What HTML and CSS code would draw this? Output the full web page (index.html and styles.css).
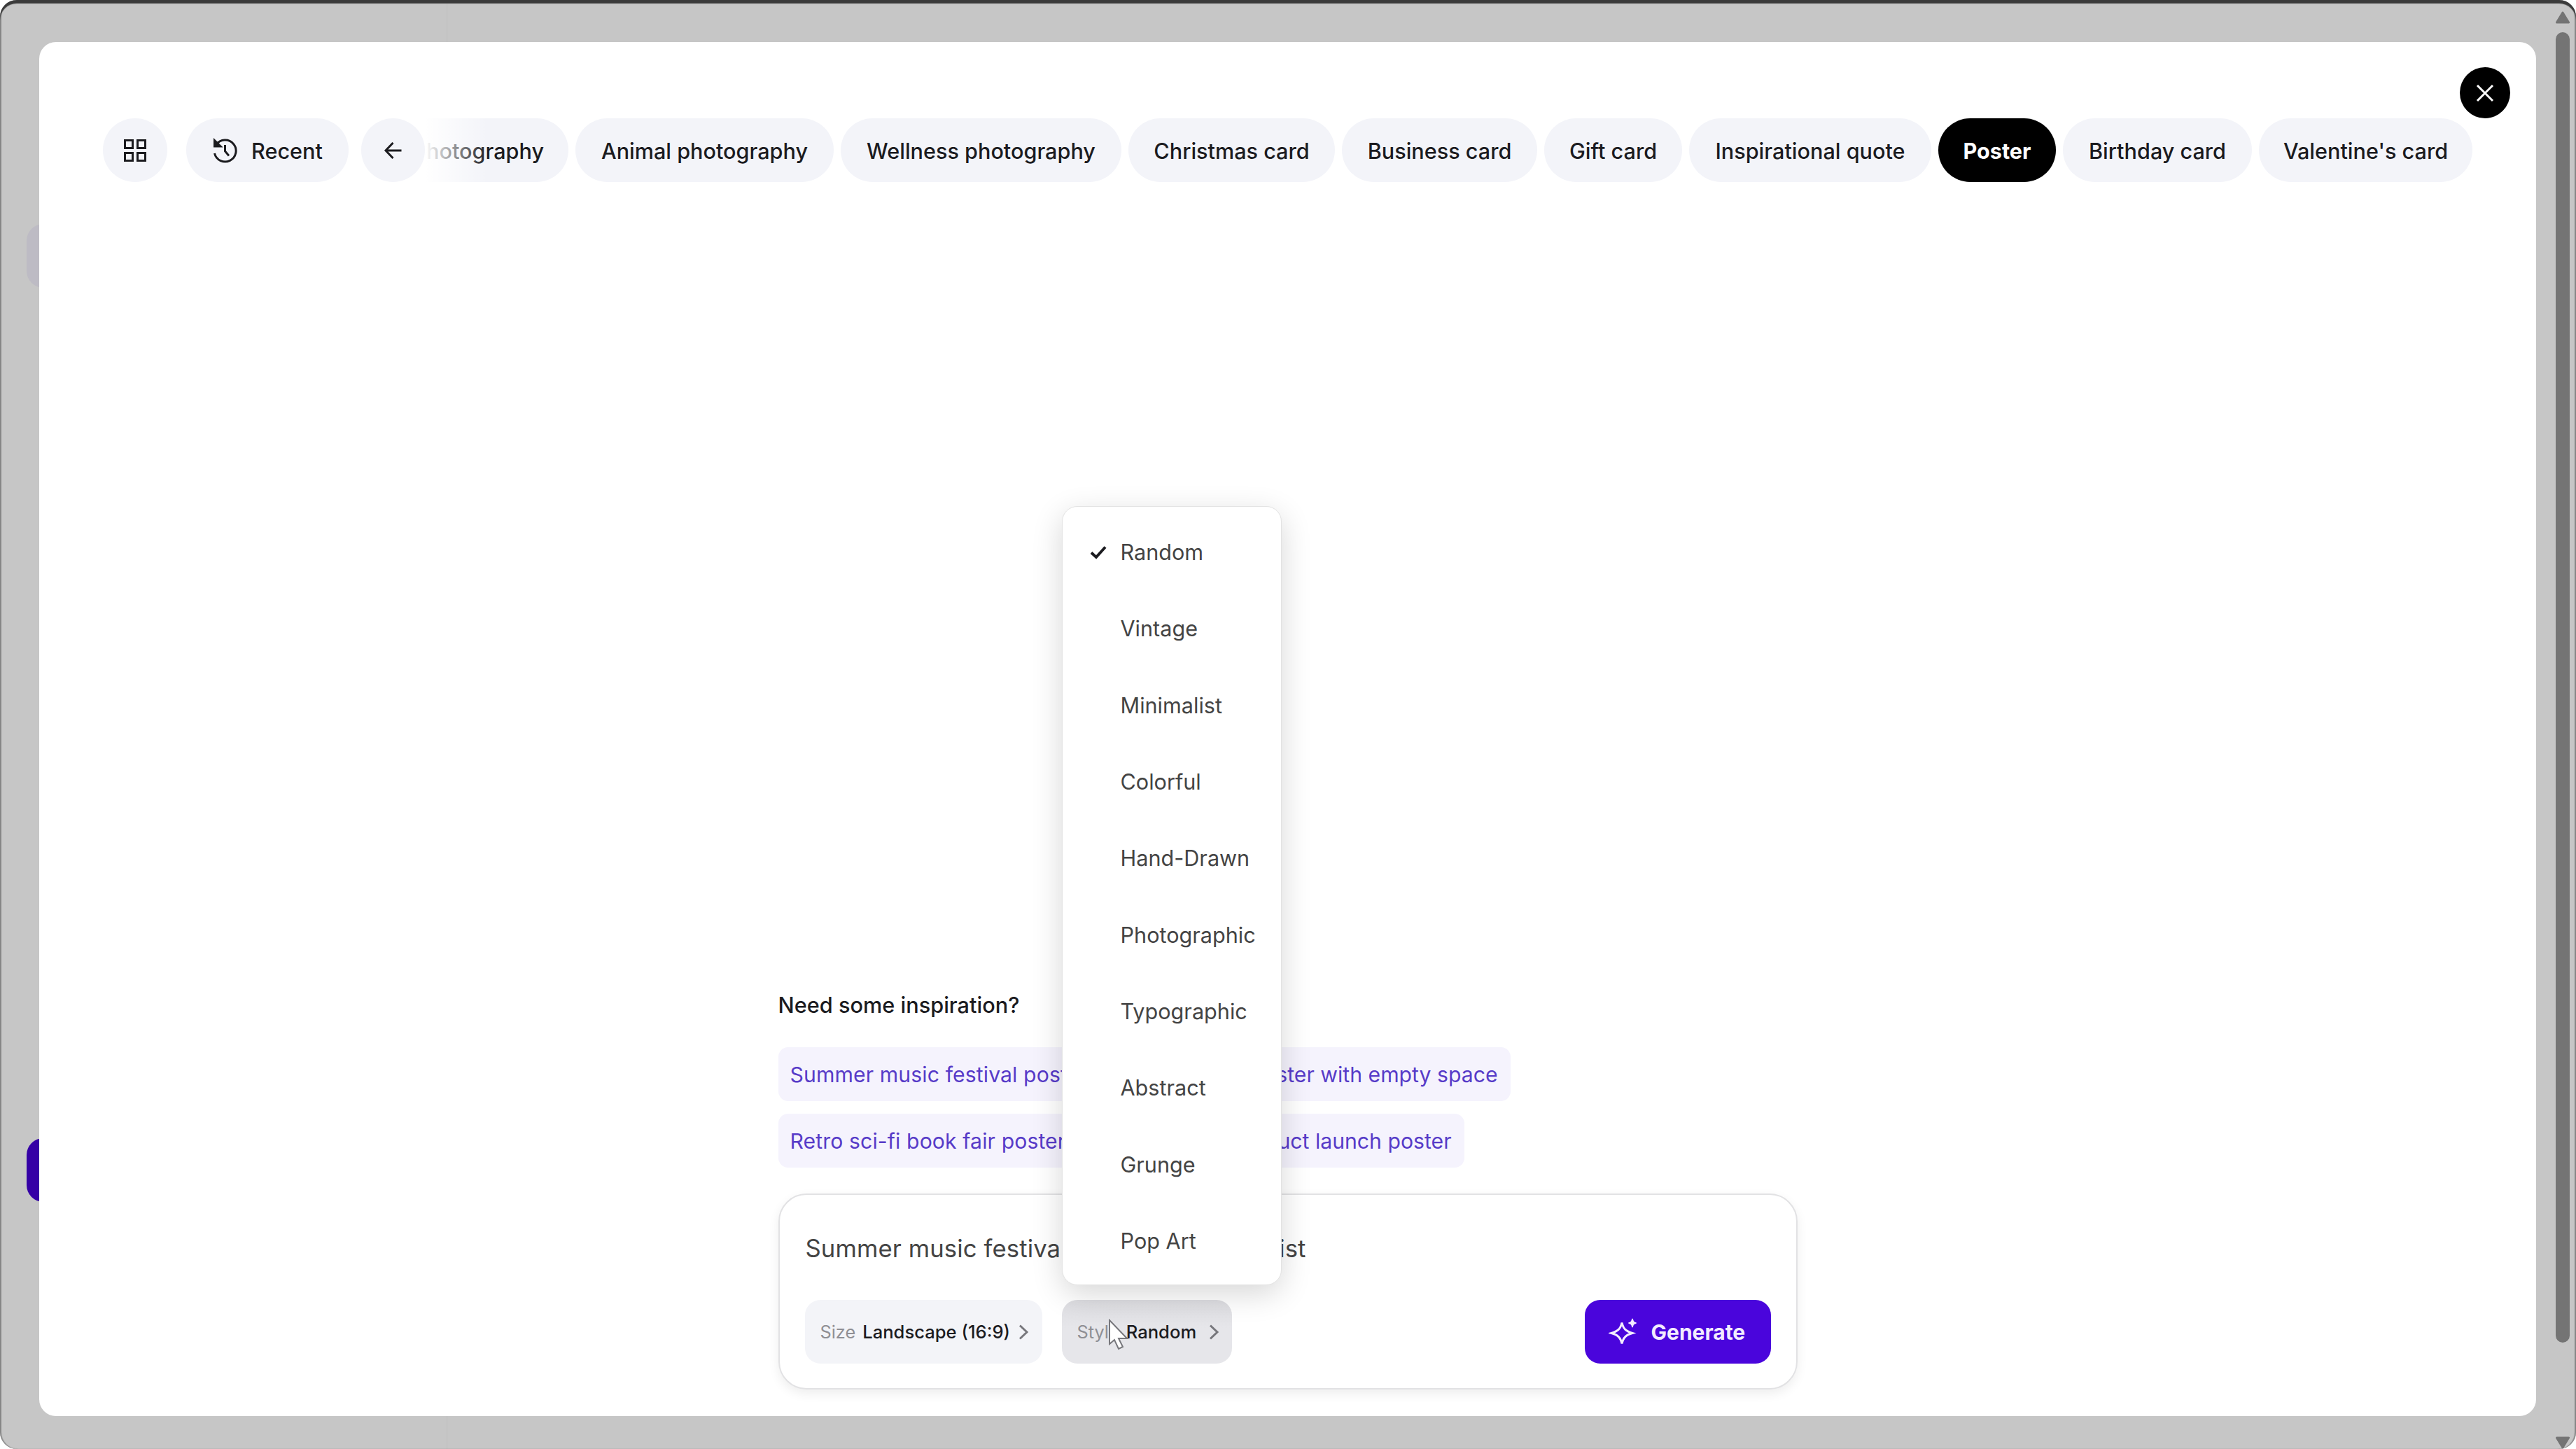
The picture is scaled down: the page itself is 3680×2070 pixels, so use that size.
FILE: index.html
```
<!DOCTYPE html>
<html lang="en">
<head>
  <meta charset="UTF-8" />
  <meta name="viewport" content="width=device-width, initial-scale=1" />
  <title>Generate image</title>
  <link rel="stylesheet" href="styles.css">
</head>
<body>
  <div class="window">
    <div class="behind behind-item"></div>
    <div class="behind behind-button"></div>

    <main class="modal">
      <button class="close" aria-label="Close">
        <svg width="26" height="26" viewBox="0 0 26 26"><path d="M2 2 24 24M24 2 2 24" /></svg>
      </button>

      <nav class="tabs">
        <button class="chip round" aria-label="All">
          <svg width="34" height="34" viewBox="0 0 34 34">
            <rect x="2.5" y="2.5" width="11" height="11" />
            <rect x="20.5" y="2.5" width="11" height="11" />
            <rect x="2.5" y="20.5" width="11" height="11" />
            <rect x="20.5" y="20.5" width="11" height="11" />
          </svg>
        </button>
        <button class="chip recent">
          <svg width="38" height="38" viewBox="0 0 38 38">
            <path d="M6 10.500A15.500 15.500 0 1 1 3.500 23M18.500 11v9l5.500 6.500" />
            <path class="solid" d="M3.500 4.500v8.500h8.500z" />
          </svg>
          Recent
        </button>
        <button class="chip round back" aria-label="Back">
          <svg width="28" height="28" viewBox="0 0 28 28"><path d="M25.500 14H3M13.500 3 3 14l10.500 11" /></svg>
        </button>
        <div class="scroller">
          <button class="chip cut">Food photography</button>
          <button class="chip">Animal photography</button>
          <button class="chip">Wellness photography</button>
          <button class="chip">Christmas card</button>
          <button class="chip">Business card</button>
          <button class="chip">Gift card</button>
          <button class="chip">Inspirational quote</button>
          <button class="chip active">Poster</button>
          <button class="chip">Birthday card</button>
          <button class="chip">Valentine's card</button>
        </div>
      </nav>

      <section class="composer">
        <h2>Need some inspiration?</h2>
        <div class="ideas">
          <div class="idea-row">
            <button class="idea">Summer music festival poster</button>
            <button class="idea idea-wide">Minimal poster with empty space</button>
          </div>
          <div class="idea-row">
            <button class="idea">Retro sci-fi book fair poster</button>
            <button class="idea idea-narrow">Tech product launch poster</button>
          </div>
        </div>

        <div class="prompt">
          <div class="prompt-text">
            <span>Summer music festival poster,</span>
            <span>minimalist</span>
          </div>
          <div class="prompt-bar">
            <button class="option size">
              <span class="label">Size</span>
              <span>Landscape (16:9)</span>
              <svg width="16" height="24" viewBox="0 0 16 24"><path d="M3 2.500 13 12 3 21.500" /></svg>
            </button>
            <div class="style-picker">
              <button class="option style">
                <span class="label">Style</span>
                <span>Random</span>
                <svg width="16" height="24" viewBox="0 0 16 24"><path d="M3 2.500 13 12 3 21.500" /></svg>
              </button>
              <ul class="menu">
                <li>
                  <svg width="24" height="20" viewBox="0 0 24 20"><path d="M2 10.500 9 17 22 2.500" /></svg>
                  Random
                </li>
                <li>Vintage</li>
                <li>Minimalist</li>
                <li>Colorful</li>
                <li>Hand-Drawn</li>
                <li>Photographic</li>
                <li>Typographic</li>
                <li>Abstract</li>
                <li>Grunge</li>
                <li>Pop Art</li>
              </ul>
              <svg class="cursor" width="32" height="46" viewBox="0 0 32 46">
                <path d="M2 2v34l7-6 6 13 6-3-6-12h12z" />
              </svg>
            </div>
            <button class="generate">
              <svg width="42" height="42" viewBox="0 0 42 42">
                <path d="M19 7.500c2 9 6 12.500 15 15-9 2.500-13 6-15 15-2-9-6-12.500-15-15 9-2.500 13-6 15-15z" />
                <path class="star" d="M34 2c.8 4 2 5.200 5.500 6-3.500.8-4.700 2-5.500 6-.8-4-2-5.200-5.500-6 3.500-.8 4.700-2 5.500-6z" />
              </svg>
              Generate
            </button>
          </div>
        </div>
      </section>
    </main>

    <aside class="scrollbar">
      <svg width="20" height="18" viewBox="0 0 20 18"><path d="M10 2 18.500 16h-17z" /></svg>
      <div class="thumb"></div>
      <svg width="20" height="18" viewBox="0 0 20 18"><path d="M10 16 18.500 2h-17z" /></svg>
    </aside>
  </div>
</body>
</html>
```
FILE: styles.css
```
* {
  box-sizing: border-box;
}
body {
  margin: 0;
  background: #fff;
  font-family: Inter, "Liberation Sans", sans-serif;
  color: #1b1b1f;
}
button {
  font: inherit;
  color: inherit;
  border: none;
  padding: 0;
  white-space: nowrap;
}
svg {
  display: block;
  flex: none;
  fill: none;
  stroke: currentColor;
  stroke-width: 3;
}
.solid {
  fill: currentColor;
}
.star {
  fill: currentColor;
  stroke-width: 1.5;
}

.window {
  position: relative;
  display: flex;
  justify-content: space-between;
  width: 3680px;
  height: 2070px;
  padding: 60px 9px 0 56px;
  border-radius: 24px;
  overflow: hidden;
  background: linear-gradient(90deg, #c6c6c6 637px, #c4c4c4 637px, #c4c4c4 640px, #c6c6c6 640px);
  box-shadow: inset 0 5px 1px #3a3a3a, inset 2px 0 1px #8c8c8c, inset -2px 0 1px #8c8c8c;
}
.behind {
  position: absolute;
  left: 38px;
  width: 60px;
  height: 91px;
  border-radius: 24px;
}
.behind-item {
  top: 320px;
  background: #bdbbc4;
}
.behind-button {
  top: 1626px;
  background: #3500a6;
}

.modal {
  position: relative;
  display: flex;
  flex-direction: column;
  justify-content: space-between;
  width: 3567px;
  height: 1963px;
  padding: 109px 91px 38px;
  border-radius: 24px;
  background: #fff;
}
.close {
  position: absolute;
  top: 36px;
  right: 37px;
  display: flex;
  align-items: center;
  justify-content: center;
  width: 72px;
  height: 73px;
  border-radius: 50%;
  background: #000;
  color: #fff;
}

/* category tabs */
.tabs {
  display: flex;
}
.chip {
  display: flex;
  align-items: center;
  justify-content: center;
  height: 91px;
  padding-top: 1px;
  border-radius: 46px;
  background: #f3f4f9;
  font-size: 30.6px;
  font-weight: 500;
}
.round {
  width: 92px;
}
.recent {
  gap: 18px;
  width: 232px;
  margin: 0 18px 0 27px;
}
.back {
  width: 91px;
}
.scroller {
  position: relative;
  display: grid;
  grid-template-columns: 205px 369px 401px 295px 279px 197px 346px 168px 270px 305px;
  gap: 10px;
}
.scroller::before {
  content: "";
  position: absolute;
  left: 0;
  top: 0;
  width: 90px;
  height: 91px;
  background: linear-gradient(90deg, #fff, rgba(255, 255, 255, 0.8) 20%, rgba(255, 255, 255, 0));
}
.cut {
  justify-content: flex-end;
  padding-right: 35px;
  border-radius: 0 46px 46px 0;
  overflow: hidden;
}
.active {
  background: #000;
  color: #fff;
  font-weight: 700;
}

/* prompt area */
.composer {
  align-self: center;
  width: 1456px;
}
h2 {
  margin: 0 0 40px;
  font-size: 30.7px;
  font-weight: 500;
  line-height: 40px;
}
.ideas {
  display: flex;
  flex-direction: column;
  gap: 18px;
}
.idea-row {
  display: flex;
  gap: 16px;
}
.idea {
  display: flex;
  align-items: center;
  justify-content: flex-end;
  height: 77px;
  padding: 0 18px;
  border-radius: 14px;
  background: #f5f3fd;
  color: #573bc8;
  font-size: 30.2px;
}
.idea-wide {
  width: 564px;
}
.idea-narrow {
  width: 498px;
}
.idea-row .idea:first-child {
  justify-content: flex-start;
  width: 466px;
  padding-left: 17px;
  letter-spacing: 0.1px;
}

.prompt {
  display: flex;
  flex-direction: column;
  justify-content: space-between;
  height: 280px;
  margin-top: 37px;
  padding: 54px 36px 35px;
  border: 2px solid #e2e2e4;
  border-radius: 40px;
  background: #fff;
  box-shadow: 0 6px 16px rgba(0, 0, 0, 0.07);
}
.prompt-text {
  display: flex;
  justify-content: space-between;
  width: 716px;
  padding-left: 1px;
  font-size: 34.7px;
  line-height: 44px;
  letter-spacing: 0.1px;
  color: #444;
}
.prompt-bar {
  display: flex;
}
.option {
  display: flex;
  align-items: center;
  height: 91px;
  padding: 0 19px 0 22px;
  border-radius: 22px;
  background: #f3f4f8;
  font-size: 25.6px;
  font-weight: 500;
}
.option svg {
  margin-left: auto;
  color: #77777c;
}
.label {
  margin-right: 10px;
  color: #8f8f94;
  font-size: 25.3px;
  font-weight: 400;
}
.size {
  width: 339px;
  margin-right: 28px;
}
.style-picker {
  position: relative;
}
.style {
  width: 243px;
  padding-right: 18px;
  background: linear-gradient(#dddde1, #e6e6ea 45%);
}

.menu {
  position: absolute;
  left: 0;
  bottom: 112px;
  width: 314px;
  height: 1113px;
  margin: 0;
  padding: 10px 0 9px;
  list-style: none;
  border: 1px solid #e3e3e3;
  border-radius: 22px;
  background: #fff;
  box-shadow: 0 12px 44px rgba(0, 0, 0, 0.16);
}
.menu li {
  display: flex;
  align-items: center;
  height: 109.3px;
  padding-left: 83px;
  font-size: 30.6px;
  color: #444;
}
.menu svg {
  margin: 0 20px 0 -44px;
  color: #1b1b1f;
  stroke-width: 4;
}
.cursor {
  position: absolute;
  left: 66px;
  top: 27px;
  fill: #fff;
  stroke: #77777c;
  stroke-width: 2;
}

.generate {
  display: flex;
  align-items: center;
  gap: 19px;
  width: 266px;
  height: 91px;
  margin-left: auto;
  padding-left: 34px;
  border-radius: 22px;
  background: #4a05dc;
  color: #f3ecff;
  font-size: 30px;
  font-weight: 700;
}

/* page scrollbar */
.scrollbar {
  display: flex;
  flex-direction: column;
  align-items: center;
  width: 20px;
  height: 2054px;
  margin-top: -44px;
  color: #747474;
}
.scrollbar svg {
  fill: currentColor;
  stroke-linejoin: round;
}
.thumb {
  width: 20px;
  height: 1872px;
  margin: 12px 0 134px;
  border-radius: 10px;
  background: #747474;
}
```
